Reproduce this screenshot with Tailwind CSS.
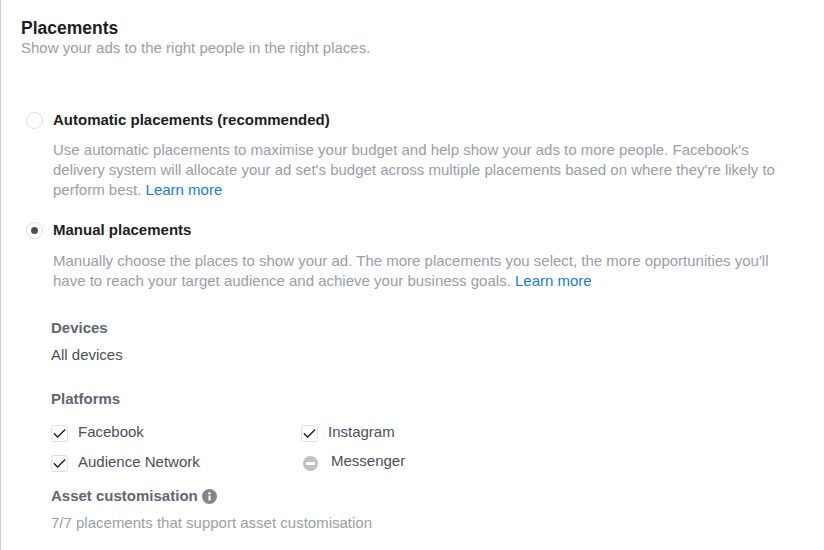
<!DOCTYPE html>
<html lang="en">
<head>
<meta charset="UTF-8">
<title>Placements</title>
<script src="https://cdn.jsdelivr.net/npm/@tailwindcss/browser@4"></script>
</head>
<body class="bg-white font-['Liberation_Sans',Arial,sans-serif] text-[15px] overflow-hidden">
<main class="w-[824px] h-[550px] border-l border-l-[#ccd0d5] pl-5 overflow-hidden">
  <h1 class="pt-[18px] text-[17.5px] leading-[20px] font-bold text-[#1c1e21]">Placements</h1>
  <p class="leading-[20px] text-[#9a9ea6]">Show your ads to the right people in the right places.</p>

  <section class="mt-[52px] pl-[5px]">
    <div class="flex items-center gap-[10px] h-5">
      <span class="w-[17px] h-[17px] rounded-full border border-[#dddfe2]"></span>
      <span class="font-bold text-[#1c1e21]">Automatic placements (recommended)</span>
    </div>
    <p class="ml-[27px] mt-[10px] w-[730px] leading-[20px] text-[#9a9ea6]">Use automatic placements to maximise your budget and help show your ads to more people. Facebook's delivery system will allocate your ad set's budget across multiple placements based on where they're likely to perform best. <a class="text-[#1877f2]">Learn more</a></p>

    <div class="flex items-center gap-[10px] h-5 mt-[20px]">
      <span class="w-[17px] h-[17px] rounded-full border border-[#dddfe2] flex items-center justify-center"><span class="w-[7px] h-[7px] rounded-full bg-[#4b4f56]"></span></span>
      <span class="font-bold text-[#1c1e21]">Manual placements</span>
    </div>
    <p class="ml-[27px] mt-[11px] w-[730px] leading-[20px] text-[#9a9ea6]">Manually choose the places to show your ad. The more placements you select, the more opportunities you'll have to reach your target audience and achieve your business goals. <a class="text-[#1877f2]">Learn more</a></p>
  </section>

  <section class="pl-[30px] mt-[27px]">
    <h2 class="font-bold text-[#606770] leading-[20px]">Devices</h2>
    <p class="mt-[7px] leading-[20px] text-[#4b4f56]">All devices</p>
    <h2 class="mt-[24px] font-bold text-[#606770] leading-[20px]">Platforms</h2>
    <div class="mt-[15px] grid grid-cols-[250px_1fr] gap-y-[14px] w-[400px]">
      <div class="flex items-center gap-[10px] h-4">
        <svg class="mt-[2px]" width="17" height="17" viewBox="0 0 17 17"><rect x="0.5" y="0.5" width="16" height="16" rx="2" fill="#fff" stroke="#dddfe2"/><path d="M2.8 8.2l3.8 3.8 7.6-7.6" fill="none" stroke="#1c1e21" stroke-width="1.4"/></svg>
        <span class="text-[#4b4f56]">Facebook</span>
      </div>
      <div class="flex items-center gap-[10px] h-4">
        <svg class="mt-[2px]" width="17" height="17" viewBox="0 0 17 17"><rect x="0.5" y="0.5" width="16" height="16" rx="2" fill="#fff" stroke="#dddfe2"/><path d="M2.8 8.2l3.8 3.8 7.6-7.6" fill="none" stroke="#1c1e21" stroke-width="1.4"/></svg>
        <span class="text-[#4b4f56]">Instagram</span>
      </div>
      <div class="flex items-center gap-[10px] h-4">
        <svg class="mt-[2px]" width="17" height="17" viewBox="0 0 17 17"><rect x="0.5" y="0.5" width="16" height="16" rx="2" fill="#fff" stroke="#dddfe2"/><path d="M2.8 8.2l3.8 3.8 7.6-7.6" fill="none" stroke="#1c1e21" stroke-width="1.4"/></svg>
        <span class="text-[#4b4f56]">Audience Network</span>
      </div>
      <div class="flex items-center gap-[13px] h-4 pl-[2px]">
        <svg class="mt-[2px]" width="15" height="15" viewBox="0 0 15 15"><circle cx="7.5" cy="7.5" r="7.5" fill="#bec2c9"/><rect x="3" y="6" width="9" height="3" fill="#fff"/></svg>
        <span class="text-[#4b4f56] mb-[2px]">Messenger</span>
      </div>
    </div>
    <div class="mt-[16px] flex items-center gap-[4px] h-5">
      <h2 class="font-bold text-[#606770]">Asset customisation</h2>
      <svg width="15" height="15" viewBox="0 0 15 15"><circle cx="7.5" cy="7.5" r="7.5" fill="#7f8591"/><rect x="6.4" y="6.5" width="2.2" height="5" fill="#fff"/><rect x="6.4" y="3.2" width="2.2" height="2.2" fill="#fff"/></svg>
    </div>
    <p class="mt-[7px] leading-[20px] text-[#9a9ea6]">7/7 placements that support asset customisation</p>
  </section>
</main>
</body>
</html>
